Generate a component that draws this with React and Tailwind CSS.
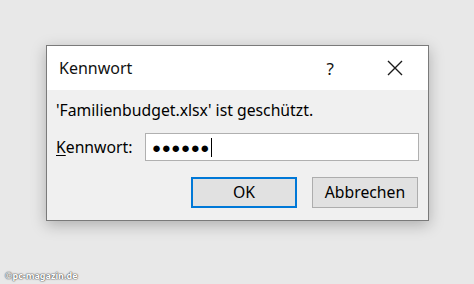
export default function App() {
  const font = { fontFamily: '"Noto Sans", "Open Sans", sans-serif' };
  return (
    <div className="w-[474px] h-[284px] bg-[#e8e8e8] relative overflow-hidden" style={font}>
      <div className="pt-[45px] pl-[46px]">
        <div className="w-[383px] h-[176px] border border-[#7a7a7a] bg-[#f0f0f0] shadow-[0_4px_14px_rgba(0,0,0,0.25)] flex flex-col">
          <div className="h-[44px] bg-white flex items-center pl-[12px] text-[#111]">
            <span className="text-[16px] leading-none">Kennwort</span>
            <span className="ml-auto text-[17px] leading-none mr-[53px]">?</span>
            <svg width="16" height="16" viewBox="0 0 16 16" className="mr-[25px]">
              <path d="M1 1 L15 15 M15 1 L1 15" stroke="#1a1a1a" strokeWidth="1.4" fill="none" />
            </svg>
          </div>
          <div className="flex flex-col px-[9px] text-black">
            <div className="mt-[10px] text-[15.75px] leading-[20px]">'Familienbudget.xlsx' ist geschützt.</div>
            <div className="mt-[13px] flex items-center">
              <span className="text-[15.75px] leading-[20px] w-[89px]"><span className="underline underline-offset-2">K</span>ennwort:</span>
              <div className="w-[274px] h-[28px] bg-white border border-[#b0b0b0] flex items-center pl-[6px]">
                <span className="text-[15px] tracking-[0.6px] leading-none text-black">●●●●●●</span>
                <span className="ml-[1px] w-[1px] h-[19px] bg-black"></span>
              </div>
            </div>
            <div className="mt-[16px] flex justify-end gap-[15px] pr-[1px]">
              <button className="w-[106px] h-[31px] bg-[#e1e1e1] border-2 border-[#0078d7] text-[15.75px] leading-none text-black">OK</button>
              <button className="w-[106px] h-[31px] bg-[#e1e1e1] border border-[#adadad] text-[15.75px] leading-none text-black">Abbrechen</button>
            </div>
          </div>
        </div>
      </div>
      <div className="absolute left-[5px] top-[269px] text-[9px] text-white font-bold [text-shadow:0_0_1px_#555,0_0_1px_#555,0_0_2px_#777]">©pc-magazin.de</div>
    </div>
  );
}
